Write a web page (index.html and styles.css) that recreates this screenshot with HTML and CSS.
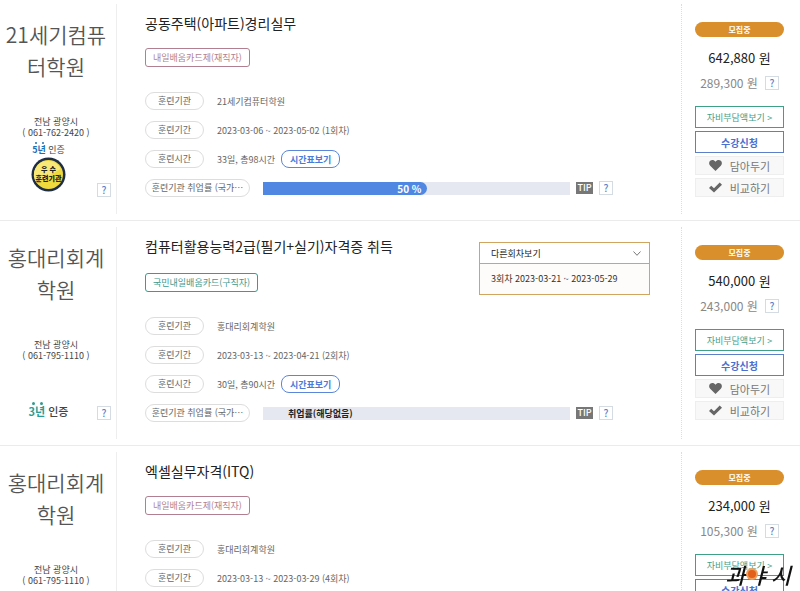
FILE: index.html
```
<!DOCTYPE html>
<html lang="ko">
<head>
    <meta charset="UTF-8">
    <meta name="viewport" content="width=device-width, initial-scale=1.0">
    <title>훈련과정 검색</title>
    <link rel="stylesheet" href="styles.css">
</head>
<body>
    <!-- 공통 아이콘 -->
    <svg class="sprite" aria-hidden="true">
        <symbol id="heart" viewBox="0 0 14 12">
            <path d="M7 12 1.2 6.3C-.4 4.600-.3 2.200 1.200.9 2.900-.5 5.500-.2 7 1.900 8.500-.2 11.100-.5 12.800.9c1.500 1.300 1.600 3.700 0 5.400z"/>
        </symbol>
        <symbol id="check" viewBox="0 0 13 10">
            <path d="M0 5.500 2.200 3.200 5 5.800 10.700 0 13 2.200 5 10z"/>
        </symbol>
    </svg>

    <main class="course-list">
        <article class="course">
            <section class="academy">
                <h2>21세기컴퓨터학원</h2>
                <p class="contact">전남 광양시<br>( 061-762-2420 )</p>
                <div class="cert">
                    <div class="cert-mark">
                        <span><b class="year blue"><i>5</i><i>년</i></b> 인증</span>
                        <svg class="medal" viewBox="0 0 35 35" role="img" aria-label="우수 훈련기관">
                            <circle cx="17.500" cy="17.500" r="17" fill="#1d2d47"/>
                            <circle cx="17.500" cy="17.500" r="14.500" fill="#f0d93c"/>
                            <path d="M17.500 4a13.500 13.500 0 0 1 12 8L6 26a13.500 13.500 0 0 1 11.500-22z" fill="#f7e878"/>
                            <text x="17.500" y="15">우 수</text>
                            <text x="17.500" y="24">훈련기관</text>
                        </svg>
                    </div>
                    <button class="help" type="button">?</button>
                </div>
            </section>
            <section class="detail">
                <div class="title-row">
                    <h3>공동주택(아파트)경리실무</h3>
                </div>
                <span class="tag pink">내일배움카드제(재직자)</span>
                <dl class="info">
                    <div><dt>훈련기관</dt><dd>21세기컴퓨터학원</dd></div>
                    <div><dt>훈련기간</dt><dd>2023-03-06 ~ 2023-05-02 (1회차)</dd></div>
                    <div><dt>훈련시간</dt><dd>33일, 총98시간 <button class="timetable" type="button">시간표보기</button></dd></div>
                    <div class="rate">
                        <dt>훈련기관 취업률 (국가⋯</dt>
                        <dd>
                            <div class="bar"><div class="fill" style="width: 50%">50 %</div></div>
                            <span class="tip">TIP</span>
                            <button class="help" type="button">?</button>
                        </dd>
                    </div>
                </dl>
            </section>
            <aside class="apply">
                <span class="status">모집중</span>
                <p class="price">642,880 원</p>
                <p class="self-price">289,300 원 <button class="help" type="button">?</button></p>
                <button class="btn green" type="button">자비부담액보기 &gt;</button>
                <button class="btn blue" type="button">수강신청</button>
                <button class="btn small" type="button"><svg class="icon"><use href="#heart"/></svg>담아두기</button>
                <button class="btn small" type="button"><svg class="icon"><use href="#check"/></svg>비교하기</button>
            </aside>
        </article>

        <article class="course">
            <section class="academy">
                <h2>홍대리회계학원</h2>
                <p class="contact">전남 광양시<br>( 061-795-1110 )</p>
                <div class="cert">
                    <div class="cert-mark large">
                        <span><b class="year teal"><i>3</i><i>년</i></b> 인증</span>
                    </div>
                    <button class="help" type="button">?</button>
                </div>
            </section>
            <section class="detail">
                <div class="title-row">
                    <h3>컴퓨터활용능력2급(필기+실기)자격증 취득</h3>
                    <div class="rounds">
                        <select aria-label="다른회차보기">
                            <option>다른회차보기</option>
                        </select>
                        <svg class="arrow" viewBox="0 0 8 5"><path d="M.5.5 4 4.300 7.500.5"/></svg>
                        <a class="round" href="#">3회차 2023-03-21 ~ 2023-05-29</a>
                    </div>
                </div>
                <span class="tag teal">국민내일배움카드(구직자)</span>
                <dl class="info">
                    <div><dt>훈련기관</dt><dd>홍대리회계학원</dd></div>
                    <div><dt>훈련기간</dt><dd>2023-03-13 ~ 2023-04-21 (2회차)</dd></div>
                    <div><dt>훈련시간</dt><dd>30일, 총90시간 <button class="timetable" type="button">시간표보기</button></dd></div>
                    <div class="rate">
                        <dt>훈련기관 취업률 (국가⋯</dt>
                        <dd>
                            <div class="bar"><span class="none">취업률(해당없음)</span></div>
                            <span class="tip">TIP</span>
                            <button class="help" type="button">?</button>
                        </dd>
                    </div>
                </dl>
            </section>
            <aside class="apply">
                <span class="status">모집중</span>
                <p class="price">540,000 원</p>
                <p class="self-price">243,000 원 <button class="help" type="button">?</button></p>
                <button class="btn green" type="button">자비부담액보기 &gt;</button>
                <button class="btn blue" type="button">수강신청</button>
                <button class="btn small" type="button"><svg class="icon"><use href="#heart"/></svg>담아두기</button>
                <button class="btn small" type="button"><svg class="icon"><use href="#check"/></svg>비교하기</button>
            </aside>
        </article>

        <article class="course">
            <section class="academy">
                <h2>홍대리회계학원</h2>
                <p class="contact">전남 광양시<br>( 061-795-1110 )</p>
            </section>
            <section class="detail">
                <div class="title-row">
                    <h3>엑셀실무자격(ITQ)</h3>
                </div>
                <span class="tag pink">내일배움카드제(재직자)</span>
                <dl class="info">
                    <div><dt>훈련기관</dt><dd>홍대리회계학원</dd></div>
                    <div><dt>훈련기간</dt><dd>2023-03-13 ~ 2023-03-29 (4회차)</dd></div>
                </dl>
            </section>
            <aside class="apply">
                <span class="status">모집중</span>
                <p class="price">234,000 원</p>
                <p class="self-price">105,300 원 <button class="help" type="button">?</button></p>
                <button class="btn green" type="button">자비부담액보기 &gt;</button>
                <button class="btn blue" type="button">수강신청</button>
            </aside>
        </article>
    </main>

    <!-- 광양시 로고 -->
    <div class="city-logo">
        <span>과</span>
        <svg viewBox="0 0 12 12"><circle cx="6" cy="6" r="6" fill="#f0a05a"/><circle cx="6" cy="6" r="4" fill="#e2601c"/></svg>
        <span class="vowel">ㅑ</span>
        <span>시</span>
    </div>
</body>
</html>
```
FILE: styles.css
```
* {
    box-sizing: border-box;
}
body {
    margin: 0;
    font-family: "Noto Sans CJK KR", "Noto Sans", sans-serif;
    font-size: 9px;
    color: #666;
    background-color: #fff;
    overflow: hidden;
}
h2, h3, p, dl, dd {
    margin: 0;
    font-weight: normal;
}
button, select {
    font-family: inherit;
    font-size: inherit;
    padding: 0;
    cursor: pointer;
}
.sprite {
    position: absolute;
    width: 0;
    height: 0;
}
.course-list {
    margin-top: -2px;
}
.course {
    display: flex;
    border-bottom: 1px solid #ebebeb;
}

/* 훈련기관 */
.academy {
    width: 117px;
    margin: 6px 0;
    padding-top: 14px;
    border-right: 1px solid #eee;
    text-align: center;
}
.academy h2 {
    padding: 0 8px 0 4px;
    font-size: 21px;
    font-weight: 350;
    line-height: 32px;
    color: #555;
    word-break: break-all;
}
.contact {
    margin-top: 34px;
    padding-right: 4px;
    line-height: 11px;
    color: #444;
}
.cert {
    display: grid;
    grid-template-columns: 97px 14px;
    align-items: end;
    height: 59px;
}
.cert-mark {
    display: flex;
    flex-direction: column;
    align-items: center;
    padding-bottom: 5px;
    line-height: 14px;
    color: #444;
}
.cert-mark.large {
    padding-bottom: 2px;
    font-size: 11px;
    font-weight: 500;
}
.year i {
    position: relative;
    font-style: normal;
}
.year i::before {
    content: "";
    position: absolute;
    top: -1px;
    left: 50%;
    width: 2px;
    height: 2px;
    border-radius: 50%;
    background-color: currentColor;
}
.cert-mark.large i::before {
    width: 3px;
    height: 3px;
}
.year.blue {
    color: #1f6fb5;
}
.year.teal {
    color: #2b9c93;
}
.medal {
    display: block;
    width: 35px;
    height: 35px;
}
.medal text {
    font-size: 7px;
    font-weight: 900;
    text-anchor: middle;
    fill: #222;
}
.help {
    flex: none;
    width: 14px;
    height: 14px;
    border: 1px solid #d5dbe3;
    background-color: #fff;
    font-size: 10px;
    font-weight: 500;
    line-height: 12px;
    color: #5b86c9;
}

/* 과정 정보 */
.detail {
    flex: 1;
    padding: 12px 31px 23px 28px;
}
.title-row {
    display: flex;
    justify-content: space-between;
    align-items: flex-start;
}
.title-row h3 {
    font-size: 14px;
    line-height: 26px;
    color: #222;
}
.rounds {
    position: relative;
    width: 171px;
    margin: 9px 0 -3px;
}
.rounds select {
    display: block;
    width: 100%;
    height: 22px;
    padding: 0 11px;
    border: 1px solid #d0a560;
    border-radius: 0;
    background-color: #fff;
    color: #222;
    appearance: none;
}
.arrow {
    position: absolute;
    top: 9px;
    right: 9px;
    width: 8px;
    height: 5px;
    fill: none;
    stroke: #777;
}
.round {
    position: absolute;
    top: 21px;
    left: 0;
    width: 100%;
    padding: 0 11px;
    border: 1px solid #d0a560;
    background-color: #fdfcfa;
    line-height: 30px;
    color: #333;
    text-decoration: none;
}
.tag {
    display: block;
    width: fit-content;
    margin-top: 12px;
    padding: 0 7px;
    border: 1px solid;
    border-radius: 3px;
    line-height: 17px;
}
.tag.pink {
    color: #b17f90;
}
.tag.teal {
    color: #3c9a90;
}
.info {
    margin-top: 25px;
}
.info > div {
    display: flex;
    align-items: center;
    gap: 13px;
    height: 18px;
}
.info > div + div {
    margin-top: 11px;
}
.info dt {
    width: 59px;
    border: 1px solid #ddd;
    border-radius: 9px;
    line-height: 16px;
    text-align: center;
    white-space: nowrap;
}
.info dd {
    display: flex;
    align-items: center;
    gap: 6px;
}
.timetable {
    width: 59px;
    height: 18px;
    border: 1px solid #5b86d9;
    border-radius: 8px;
    background-color: #fff;
    font-weight: bold;
    color: #4a7bd8;
}
.info .rate dt {
    width: 105px;
}
.rate dd {
    flex: 1;
    padding-right: 37px;
}
.bar {
    flex: 1;
    height: 13px;
    background-color: #e5e8f1;
    line-height: 13px;
}
.fill {
    box-sizing: content-box;
    padding: 0 5px;
    border-radius: 0 7px 7px 0;
    background-color: #4f87e3;
    font-size: 10px;
    font-weight: bold;
    text-align: right;
    color: #fff;
}
.none {
    display: block;
    padding-left: 25px;
    font-weight: bold;
    color: #222;
}
.tip {
    width: 17px;
    background-color: #777;
    font-weight: 500;
    line-height: 12px;
    text-align: center;
    color: #fff;
}

/* 신청 */
.apply {
    display: flex;
    flex-direction: column;
    gap: 3px;
    width: 119px;
    margin: 6px 0;
    padding: 18px 16px 0 13px;
    border-left: 1px dotted #ddd;
    text-align: center;
}
.status {
    border-radius: 8px;
    background-color: #d98f2b;
    font-size: 8px;
    font-weight: bold;
    line-height: 15px;
    color: #fff;
}
.price {
    margin-top: 7px;
    font-size: 13px;
    line-height: 22px;
    color: #222;
}
.self-price {
    display: flex;
    justify-content: center;
    align-items: center;
    gap: 7px;
    margin-bottom: 10px;
    font-size: 12px;
    line-height: 21px;
    color: #888;
}
.btn {
    display: flex;
    justify-content: center;
    align-items: center;
    height: 22px;
    border: 1px solid;
    background-color: #fff;
}
.btn.green {
    border-color: #3fa088;
    color: #3fa088;
}
.btn.blue {
    border-color: #5b7fc9;
    font-size: 10px;
    font-weight: bold;
    color: #4a6fd0;
}
.btn.small {
    gap: 8px;
    height: 19px;
    border-color: #eee;
    background-color: #f8f8f8;
    font-size: 11px;
    color: #777;
}
.icon {
    width: 13px;
    height: 11px;
    fill: #666;
}

/* 로고 */
.city-logo {
    position: fixed;
    right: 9px;
    bottom: 4px;
    display: flex;
    align-items: center;
    font-size: 22px;
    font-style: italic;
    font-weight: 500;
    line-height: 26px;
    color: #111;
}
.city-logo svg {
    width: 12px;
    height: 12px;
}
.city-logo .vowel {
    margin-left: -7px;
}
```
